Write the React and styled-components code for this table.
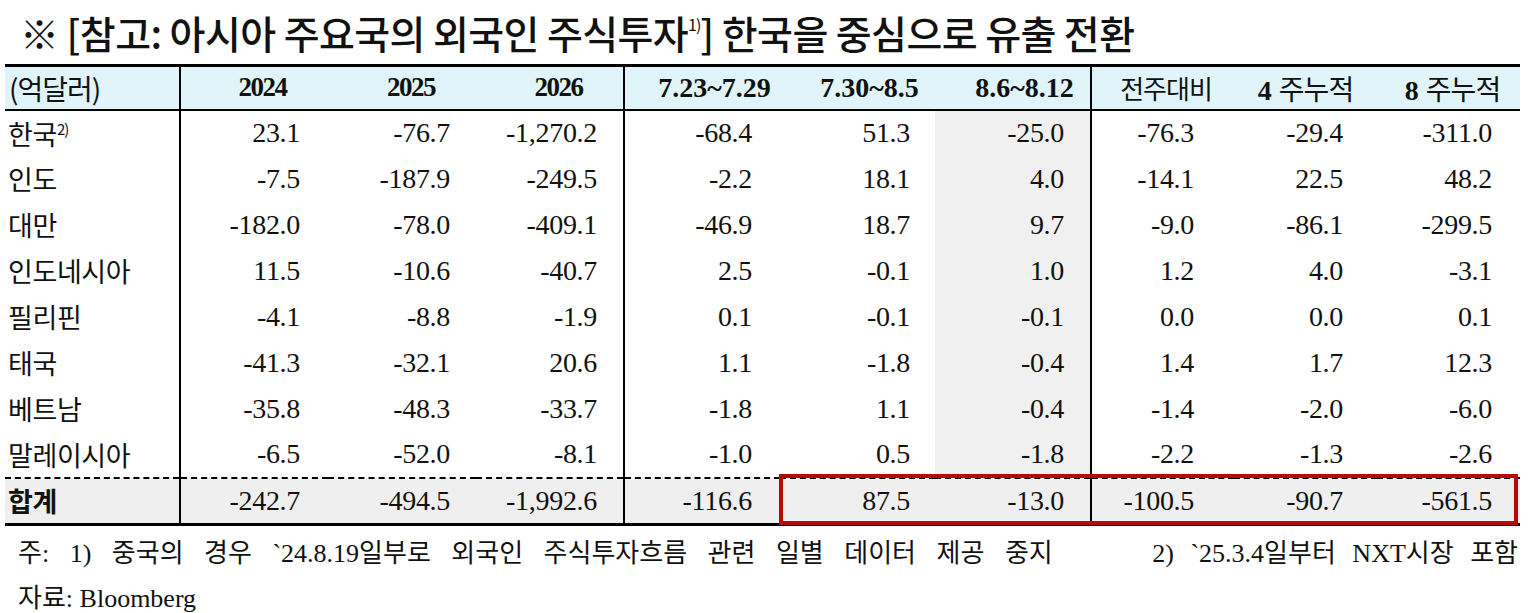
import React from "react";
import styled, { createGlobalStyle } from "styled-components";

const GlobalStyle = createGlobalStyle`
  body {
    margin: 0;
    background: #fff;
    color: #111;
    font-family: "Liberation Serif", "Noto Sans CJK KR", serif;
  }
`;

const KR = `"Noto Sans CJK KR", "Noto Sans", sans-serif`;
const NUM = `"Liberation Serif", "Noto Sans CJK KR", serif`;

const rows = [
  { name: "한국", note: "2)", v: ["23.1", "-76.7", "-1,270.2", "-68.4", "51.3", "-25.0", "-76.3", "-29.4", "-311.0"] },
  { name: "인도", v: ["-7.5", "-187.9", "-249.5", "-2.2", "18.1", "4.0", "-14.1", "22.5", "48.2"] },
  { name: "대만", v: ["-182.0", "-78.0", "-409.1", "-46.9", "18.7", "9.7", "-9.0", "-86.1", "-299.5"] },
  { name: "인도네시아", v: ["11.5", "-10.6", "-40.7", "2.5", "-0.1", "1.0", "1.2", "4.0", "-3.1"] },
  { name: "필리핀", v: ["-4.1", "-8.8", "-1.9", "0.1", "-0.1", "-0.1", "0.0", "0.0", "0.1"] },
  { name: "태국", v: ["-41.3", "-32.1", "20.6", "1.1", "-1.8", "-0.4", "1.4", "1.7", "12.3"] },
  { name: "베트남", v: ["-35.8", "-48.3", "-33.7", "-1.8", "1.1", "-0.4", "-1.4", "-2.0", "-6.0"] },
  { name: "말레이시아", v: ["-6.5", "-52.0", "-8.1", "-1.0", "0.5", "-1.8", "-2.2", "-1.3", "-2.6"] },
];

const total = ["-242.7", "-494.5", "-1,992.6", "-116.6", "87.5", "-13.0", "-100.5", "-90.7", "-561.5"];

const colWidths = [175, 148, 148, 148, 156, 155, 156, 143, 143, 143];
const padRight = [28, 26, 26, 28, 25, 26, 40, 34, 28];

const Page = styled.div`
  width: 1528px;
  height: 613px;
  overflow: hidden;
  position: relative;
`;

const Title = styled.h1`
  margin: 0;
  height: 64px;
  padding: 2px 0 0 20px;
  box-sizing: border-box;
  font-family: ${KR};
  font-weight: 500;
  font-size: 39px;
  line-height: 60px;
  letter-spacing: -0.6px;
  white-space: nowrap;
`;

const Sup = styled.sup`
  font-size: ${(p) => p.$size || 16}px;
  vertical-align: ${(p) => p.$raise || 14}px;
  line-height: 0;
  letter-spacing: -1px;
  font-weight: 400;
`;

const TableWrap = styled.div`
  position: relative;
  margin-left: 5px;
  width: 1515px;
`;

const Table = styled.table`
  border-collapse: collapse;
  table-layout: fixed;
  width: 1515px;
  border-top: 3px solid #000;
  border-bottom: 3px solid #000;
`;

const HeadRow = styled.tr`
  height: 44px;
  background: #e1f4fa;
  border-bottom: 2px solid #000;
`;

const Row = styled.tr`
  height: ${(p) => (p.$total ? 47 : 46)}px;
  background: ${(p) => (p.$total ? "#efefef" : "transparent")};
  border-top: ${(p) => (p.$total ? "2px dashed #000" : "none")};
`;

const Th = styled.th`
  padding: 0;
  font-family: ${(p) => (p.$kr ? KR : NUM)};
  font-weight: ${(p) => (p.$kr ? 400 : 700)};
  font-size: ${(p) => p.$size || 27}px;
  letter-spacing: ${(p) => p.$ls ?? -1}px;
  text-align: ${(p) => p.$align || "center"};
  padding-left: ${(p) => p.$padL || 0}px;
  border-right: ${(p) => (p.$divider ? "2px solid #000" : "none")};
  white-space: nowrap;
`;

const Bold = styled.span`
  font-family: ${NUM};
  font-weight: 700;
  font-size: 28px;
  margin-right: 8px;
`;

const Label = styled.td`
  padding: 0 0 0 3px;
  font-family: ${KR};
  font-size: 27px;
  font-weight: ${(p) => (p.$bold ? 700 : 400)};
  letter-spacing: -0.4px;
  border-right: 2px solid #000;
  white-space: nowrap;
`;

const Num = styled.td`
  padding: 0 ${(p) => p.$pad}px 0 0;
  text-align: right;
  font-family: ${NUM};
  font-size: 28px;
  letter-spacing: -0.3px;
  background: ${(p) => (p.$shade ? "#f0f0f0" : "transparent")};
  border-right: ${(p) => (p.$divider ? "2px solid #000" : "none")};
  white-space: nowrap;
`;

const Highlight = styled.div`
  position: absolute;
  left: 774px;
  right: 2px;
  bottom: 1px;
  height: 51px;
  border: 4px solid #b40a0a;
  box-sizing: border-box;
  pointer-events: none;
`;

const Notes = styled.div`
  padding-top: 5px;
  font-family: ${NUM};
  font-size: 26px;
  line-height: 45px;
`;

const NoteLine = styled.div`
  display: flex;
  justify-content: space-between;
  padding: 0 10px 0 18px;
  white-space: nowrap;
`;

const Note = styled.span`
  word-spacing: ${(p) => p.$ws || 0}px;
`;

const isDivider = (i) => i === 2 || i === 5;

export default function App() {
  return (
    <Page>
      <GlobalStyle />
      <Title>
        ※ [참고: 아시아 주요국의 외국인 주식투자<Sup $size={16} $raise={18}>1)</Sup>] 한국을 중심으로 유출 전환
      </Title>
      <TableWrap>
        <Table>
          <colgroup>
            {colWidths.map((w, i) => (
              <col key={i} style={{ width: w }} />
            ))}
          </colgroup>
          <thead>
            <HeadRow>
              <Th $kr $size={28} $ls={-1} $align="left" $padL={4} $divider>
                (억달러)
              </Th>
              <Th $ls={-1.5} $padL={16}>2024</Th>
              <Th $ls={-1.5} $padL={18}>2025</Th>
              <Th $ls={-1.5} $padL={18} $divider>2026</Th>
              <Th $size={28} $ls={0} $padL={24}>7.23~7.29</Th>
              <Th $size={28} $ls={0} $padL={24}>7.30~8.5</Th>
              <Th $size={28} $ls={0} $padL={24} $divider>8.6~8.12</Th>
              <Th $kr $size={26} $ls={-1} $padL={6}>전주대비</Th>
              <Th $kr $size={28} $ls={-1}>
                <Bold>4</Bold>주누적
              </Th>
              <Th $kr $size={28} $ls={-1} $padL={8}>
                <Bold>8</Bold>주누적
              </Th>
            </HeadRow>
          </thead>
          <tbody>
            {rows.map((r) => (
              <Row key={r.name}>
                <Label>
                  {r.name}
                  {r.note && (
                    <Sup $size={15} $raise={10}>
                      {r.note}
                    </Sup>
                  )}
                </Label>
                {r.v.map((v, i) => (
                  <Num key={i} $pad={padRight[i]} $shade={i === 5} $divider={isDivider(i)}>
                    {v}
                  </Num>
                ))}
              </Row>
            ))}
            <Row $total>
              <Label $bold>합계</Label>
              {total.map((v, i) => (
                <Num key={i} $pad={padRight[i]} $divider={isDivider(i)}>
                  {v}
                </Num>
              ))}
            </Row>
          </tbody>
        </Table>
        <Highlight />
      </TableWrap>
      <Notes>
        <NoteLine>
          <Note $ws={14}>주: 1) 중국의 경우 `24.8.19일부로 외국인 주식투자흐름 관련 일별 데이터 제공 중지</Note>
          <Note $ws={10}>2) `25.3.4일부터 NXT시장 포함</Note>
        </NoteLine>
        <NoteLine>
          <Note>자료: Bloomberg</Note>
        </NoteLine>
      </Notes>
    </Page>
  );
}
